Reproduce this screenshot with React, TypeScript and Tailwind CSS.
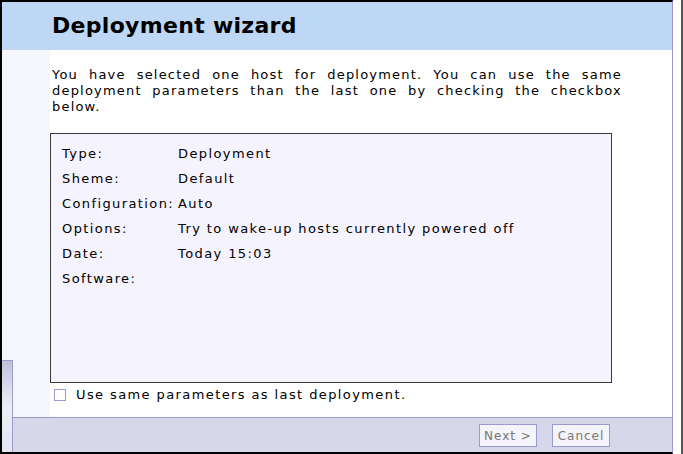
import React from "react";

const ROWS = [
  { label: "Type:", value: "Deployment" },
  { label: "Sheme:", value: "Default" },
  { label: "Configuration:", value: "Auto" },
  { label: "Options:", value: "Try to wake-up hosts currently powered off" },
  { label: "Date:", value: "Today 15:03" },
  { label: "Software:", value: "" },
];

export default function App() {
  return (
    <div className="flex h-[454px] w-[683px] bg-white font-['DejaVu_Sans',Verdana,sans-serif] text-black">
      <div className="flex w-[673px] flex-col border-y-2 border-l-2 border-r border-black border-r-[#9a9ad0]">
        {/* header */}
        <div className="h-[48px] shrink-0 bg-[#bdd7f4] pl-[50px] pt-[11px]">
          <h1 className="text-[22px] font-bold leading-[26px] tracking-[0.3px]">Deployment wizard</h1>
        </div>

        <div className="flex flex-1">
          {/* left strip with tab */}
          <div className="flex w-[11px] flex-col">
            <div className="flex-1 bg-[#f6f6fd]" />
            <div className="h-[92px] border-r border-t border-[#9a9ad0] bg-gradient-to-b from-[#bfc3da] via-[#eceef7] to-[#e4e5f1]" />
          </div>

          <div className="flex flex-1 flex-col">
            <div className="flex flex-1">
              <div className="w-[37px] bg-[#f6f6fd]" />
              <div className="flex-1">
                <p className="mt-[17px] w-[572px] pl-[2px] text-justify text-[13px] leading-[16px] tracking-[1.2px]">
                  You have selected one host for deployment. You can use the same deployment parameters than the last one by checking the checkbox below.
                </p>

                <div className="mt-[18px] h-[250px] w-[562px] border border-[#3a3a3a] bg-[#f5f3fe] pl-[11px] pt-[7px] text-[13px] leading-[25px] tracking-[1.4px]">
                  {ROWS.map((r) => (
                    <div key={r.label} className="flex">
                      <span className="w-[116px] shrink-0">{r.label}</span>
                      <span>{r.value}</span>
                    </div>
                  ))}
                </div>

                <label className="mt-[4px] flex items-center gap-[10px] pl-[4px] text-[13px] leading-[16px] tracking-[1.4px]">
                  <span className="h-[12px] w-[12px] border border-[#9a9ad0] bg-white" />
                  Use same parameters as last deployment.
                </label>
              </div>
            </div>

            {/* footer */}
            <div className="flex h-[35px] shrink-0 items-start justify-end gap-[15px] border-t border-[#9a9ad0] bg-[#d6d8e9] pr-[62px] pt-[6px]">
              <button className="h-[23px] w-[58px] border border-[#9a9ad0] bg-[#f4f4fa] text-[12px] tracking-[1px] text-[#777]">
                Next &gt;
              </button>
              <button className="h-[23px] w-[58px] border border-[#9a9ad0] bg-[#f4f4fa] text-[12px] tracking-[1px] text-[#777]">
                Cancel
              </button>
            </div>
          </div>
        </div>
      </div>
      <div className="w-[8px]" />
      <div className="w-[2px] bg-[#555]" />
    </div>
  );
}
